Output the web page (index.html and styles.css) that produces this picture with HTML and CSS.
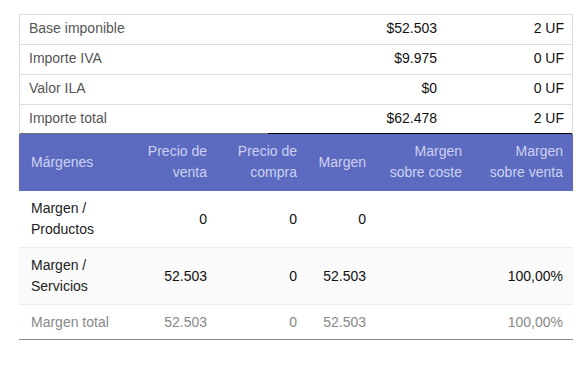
FILE: index.html
```html
<!DOCTYPE html>
<html lang="es">
<head>
<meta charset="utf-8">
<link rel="stylesheet" href="styles.css">
</head>
<body>
<div class="wrap">
  <table class="totals">
    <colgroup><col class="c1"><col class="c2"><col class="c3"></colgroup>
    <tbody>
      <tr><td class="lbl">Base imponible</td><td class="num">$52.503</td><td class="num">2 UF</td></tr>
      <tr><td class="lbl">Importe IVA</td><td class="num">$9.975</td><td class="num">0 UF</td></tr>
      <tr><td class="lbl">Valor ILA</td><td class="num">$0</td><td class="num">0 UF</td></tr>
      <tr class="last"><td class="lbl">Importe total</td><td class="num">$62.478</td><td class="num">2 UF</td></tr>
    </tbody>
  </table>
  <table class="margins">
    <colgroup><col class="m1"><col class="m2"><col class="m3"><col class="m4"><col class="m5"><col class="m6"></colgroup>
    <thead>
      <tr>
        <th class="lft">Márgenes</th>
        <th>Precio de<br>venta</th>
        <th>Precio de<br>compra</th>
        <th>Margen</th>
        <th>Margen<br>sobre coste</th>
        <th>Margen<br>sobre venta</th>
      </tr>
    </thead>
    <tbody>
      <tr>
        <td class="lft">Margen /<br>Productos</td><td>0</td><td>0</td><td>0</td><td></td><td></td>
      </tr>
      <tr class="alt">
        <td class="lft">Margen /<br>Servicios</td><td>52.503</td><td>0</td><td>52.503</td><td></td><td>100,00%</td>
      </tr>
      <tr class="total">
        <td class="lft">Margen total</td><td>52.503</td><td>0</td><td>52.503</td><td></td><td>100,00%</td>
      </tr>
    </tbody>
  </table>
</div>
</body>
</html>
```
FILE: styles.css
```css
html, body {
  margin: 0;
  padding: 0;
  background: #fff;
}
body {
  font-family: "Liberation Sans", Arial, sans-serif;
  font-size: 14px;
  line-height: 21px;
  color: #222;
}
.wrap {
  padding: 14px 0 0 19px;
  width: 554px;
}
table {
  border-collapse: separate;
  border-spacing: 0;
  table-layout: fixed;
}
.totals {
  width: 554px;
  border: 1px solid #ddd;
  border-bottom: none;
}
.totals .c1 { width: 248px; }
.totals .c2 { width: 177px; }
.totals .c3 { width: 127px; }
.totals td {
  padding: 3px 8px 5px;
  border-bottom: 1px solid #ddd;
  white-space: nowrap;
}
.totals .lbl {
  padding-left: 9px;
  color: #555;
}
.totals .num {
  text-align: right;
  color: #111;
}
.totals .last td {
  padding-bottom: 4px;
  border-bottom-color: #000;
}
.totals .last td.lbl {
  border-bottom-color: #6f6f6f;
}
.margins {
  width: 554px;
}
.margins .m1 { width: 108px; }
.margins .m2 { width: 90px; }
.margins .m3 { width: 90px; }
.margins .m4 { width: 69px; }
.margins .m5 { width: 96px; }
.margins .m6 { width: 101px; }
.margins th {
  background: #5c6bc0;
  color: #cdd1f1;
  font-weight: normal;
  text-align: right;
  vertical-align: middle;
  white-space: nowrap;
  padding: 7px 10px 8px 4px;
}
.margins td {
  text-align: right;
  vertical-align: middle;
  padding: 7px 10px 7px 4px;
  color: #111;
}
.margins .lft {
  text-align: left;
  padding-left: 12px;
}
.margins td.lft {
  color: #222;
}
.margins tbody tr + tr td {
  border-top: 1px solid #eee;
}
.margins .alt td {
  background: #fafafa;
}
.margins .total td {
  color: #888;
  padding-top: 7px;
  padding-bottom: 6px;
  border-bottom: 1px solid #888;
}
.margins .total td.lft {
  color: #888;
}
```
